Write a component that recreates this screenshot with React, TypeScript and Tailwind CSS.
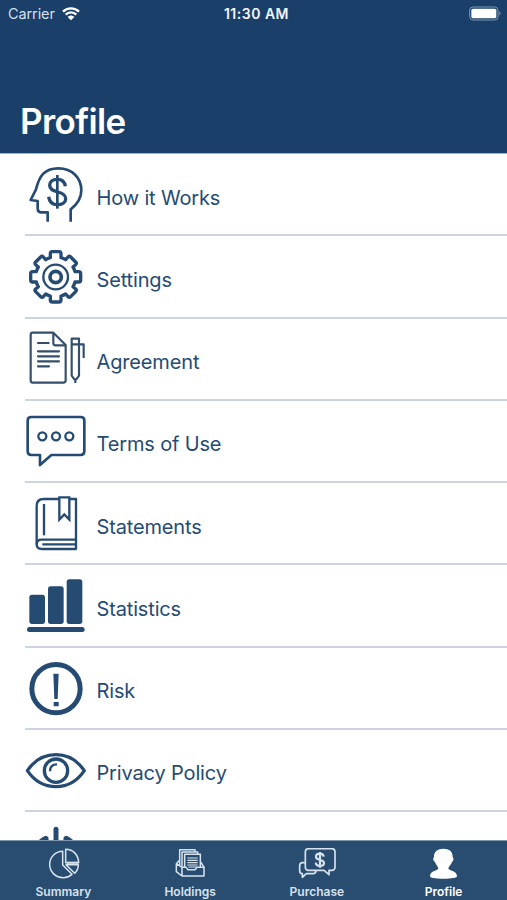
import React from 'react';

type IconProps = { children: React.ReactNode };

const RowIcon: React.FC<IconProps> = ({ children }) => (
  <svg
    className="w-16 h-15 shrink-0"
    viewBox="30 30 192 180"
    fill="none"
    stroke="currentColor"
    strokeWidth="8"
    strokeLinejoin="round"
  >
    {children}
  </svg>
);

const HowItWorksIcon = () => (
  <RowIcon>
    <path d="M98 200V172H77Q68 172 68 160V138L47 135L63 103C73 64 87 40 130 40C172 40 199 69 199 106C199 132 187 148 167 163V200" />
    <path d="M127 60V161" />
    <path d="M151 94C149 79 140 73 127 73C112 73 104 81 104 91C104 103 113 107 128 111C145 115 152 120 152 132C152 142 142 149 127 149C112 149 103 140 101 125" strokeWidth="10" />
  </RowIcon>
);

const SettingsIcon = () => (
  <RowIcon>
    <path strokeWidth="10" d="M106 62V50Q106 44 112 44H132Q138 44 138 50V62Q146 64 152 68L159 60Q163 56 167 60L182 75Q186 79 182 83L174 90Q178 96 180 104H191Q197 104 197 110V129Q197 135 191 135H180Q178 143 174 149L182 156Q186 160 182 164L167 179Q163 183 159 179L152 171Q146 175 138 177V189Q138 195 132 195H112Q106 195 106 189V177Q98 175 92 171L85 179Q81 183 77 179L62 164Q58 160 62 156L70 149Q66 143 64 135H53Q47 135 47 129V110Q47 104 53 104H64Q66 96 70 90L62 83Q58 79 62 75L77 60Q81 56 85 60L92 68Q98 64 106 62Z" />
    <circle cx="122" cy="120" r="37" strokeWidth="7" />
    <circle cx="122" cy="120" r="17" strokeWidth="11" />
  </RowIcon>
);

const AgreementIcon = () => (
  <RowIcon>
    <g strokeWidth="6.5" stroke="#334f6b">
      <path d="M53 41H115L152 78V184Q152 191 145 191H53Q47 191 47 184V48Q47 41 53 41Z" />
      <path d="M115 42V72Q115 79 122 79H151" />
      <path d="M69 72H101M69 97H132M69 112H132M69 127H132M69 142H102" strokeLinecap="round" />
      <path d="M170 59H192V170L184 181H178L170 170ZM170 76H206V117M181 181V192" />
    </g>
  </RowIcon>
);

const TermsIcon = () => (
  <RowIcon>
    <path d="M49 48H197Q208 48 208 59V151Q208 162 197 162H109L75 192V162H49Q38 162 38 151V59Q38 48 49 48Z" />
    <circle cx="82" cy="106" r="12" strokeWidth="7" />
    <circle cx="123" cy="106" r="12" strokeWidth="7" />
    <circle cx="163" cy="106" r="12" strokeWidth="7" />
  </RowIcon>
);

const StatementsIcon = () => (
  <RowIcon>
    <g strokeWidth="7">
      <path d="M132 45H86Q65 45 65 65V181Q65 195 80 195H183V45H164" />
      <path d="M65 181Q65 167 80 167H183M183 181H82" />
      <path d="M87 60V154" />
      <path d="M133 40H163V107L148 91L133 107Z" strokeLinejoin="miter" />
    </g>
  </RowIcon>
);

const StatisticsIcon = () => (
  <RowIcon>
    <g fill="currentColor" stroke="none">
      <rect x="43" y="86" width="47" height="88" rx="8" />
      <rect x="99" y="61" width="47" height="113" rx="8" />
      <rect x="155" y="40" width="47" height="134" rx="8" />
      <rect x="36" y="183" width="173" height="15" rx="7.5" />
    </g>
  </RowIcon>
);

const RiskIcon = () => (
  <RowIcon>
    <circle cx="123" cy="122" r="72.5" strokeWidth="15" />
    <path d="M115 77H131L128 153H118ZM116 162H131V175H116Z" fill="currentColor" stroke="none" />
  </RowIcon>
);

const PrivacyIcon = () => (
  <RowIcon>
    <path d="M37 122C58 91 88 74 123 74C158 74 187 91 208 122C187 153 158 170 123 170C88 170 58 153 37 122Z" strokeWidth="9.5" />
    <circle cx="123" cy="122" r="35" strokeWidth="10" />
    <path d="M105 124C105 111 113 103 126 103" strokeWidth="7" />
  </RowIcon>
);

const LogoutIcon = () => (
  <RowIcon>
    <path d="M123 49V120" strokeWidth="15" strokeLinecap="round" />
    <path d="M92 77A65 65 0 1 0 154 77" strokeWidth="17" strokeLinecap="round" />
  </RowIcon>
);

const rows = [
  { label: 'How it Works', Icon: HowItWorksIcon },
  { label: 'Settings', Icon: SettingsIcon },
  { label: 'Agreement', Icon: AgreementIcon },
  { label: 'Terms of Use', Icon: TermsIcon },
  { label: 'Statements', Icon: StatementsIcon },
  { label: 'Statistics', Icon: StatisticsIcon },
  { label: 'Risk', Icon: RiskIcon },
  { label: 'Privacy Policy', Icon: PrivacyIcon },
  { label: '', Icon: LogoutIcon },
];

const TabIcon: React.FC<IconProps & { viewBox: string }> = ({ children, viewBox }) => (
  <svg
    className="w-10 h-8"
    viewBox={viewBox}
    fill="none"
    stroke="currentColor"
    strokeWidth="4.5"
    strokeLinejoin="round"
  >
    {children}
  </svg>
);

const SummaryIcon = () => (
  <TabIcon viewBox="-3 1 120 96">
    <path d="M56 11C32 12 17 30 17 50C17 73 35 90 58 90C68 90 77 86 84 80L56 52Z" />
    <path d="M65 5V45H104C103 22 88 5 65 5Z" />
    <path d="M66 51H103C103 61 99 70 92 77Z" />
    <path d="M67 44H103M68 48H103" opacity=".7" />
  </TabIcon>
);

const HoldingsIcon = () => (
  <TabIcon viewBox="0 2 120 96">
    <path d="M19 49L36 60H48L54 67H75L81 60H102V86H36L19 73ZM36 60V86" />
    <path d="M19 49L29 38M102 60L93 45M29 54V7H75V13M36 58V14H83V21M44 60V21H91V60" />
    <path d="M52 32H83M52 39H83M52 46H83M52 53H83M55 59H80" strokeWidth="3.5" />
  </TabIcon>
);

const PurchaseIcon = () => (
  <TabIcon viewBox="-7 2 120 96">
    <path d="M28 4H97Q107 4 107 14V59Q107 69 97 69H89V82L74 69H28Q18 69 18 59V14Q18 4 28 4Z" strokeWidth="5" />
    <path d="M17 46H10Q1 46 1 55V70Q1 79 9 79V90L21 79H42Q49 79 50 70" strokeWidth="5" />
    <path d="M73 28C72 21 67 19 62 19C55 19 50 22 50 28C50 35 56 36 62 37C69 39 74 41 74 47C74 53 69 56 62 56C54 56 50 53 49 46M62 14V61" strokeWidth="6.5" />
  </TabIcon>
);

const ProfileIcon = () => (
  <TabIcon viewBox="3 2 120 96">
    <path
      d="M61 4C78 4 90 12 89 30C93 33 92 41 87 44C84 53 77 57 76 63C77 71 101 70 102 86C102 92 87 94 61 94C35 94 21 92 21 86C22 70 45 71 46 63C45 57 39 53 36 44C30 41 29 33 33 30C32 12 45 4 61 4Z"
      fill="currentColor"
      stroke="none"
    />
  </TabIcon>
);

const tabs = [
  { label: 'Summary', Icon: SummaryIcon, active: false },
  { label: 'Holdings', Icon: HoldingsIcon, active: false },
  { label: 'Purchase', Icon: PurchaseIcon, active: false },
  { label: 'Profile', Icon: ProfileIcon, active: true },
];

const StatusBar = () => (
  <div className="grid grid-cols-3 items-center h-7 pl-2 pr-1.5 text-sm">
    <div className="flex items-center gap-[7px] text-[#d5dfeb]">
      <span className="text-[14.5px] tracking-[-0.1px]">Carrier</span>
      <svg className="w-[18px] h-[14px] text-white" viewBox="0 0 54 42" fill="none" stroke="currentColor" strokeWidth="7">
        <path d="M3 14C16 1 38 1 51 14M11 23C20 14 34 14 43 23" />
        <path d="M17 30C23 24 31 24 37 30L27 40Z" fill="currentColor" stroke="none" />
      </svg>
    </div>
    <span className="text-center font-semibold text-[#f2f6fa] tracking-[0.5px] pl-1">11:30 AM</span>
    <svg className="w-8 h-[15px] -mt-px justify-self-end" viewBox="0 0 96 45">
      <rect x="2" y="3" width="85" height="39" rx="10" fill="none" stroke="#8098b3" strokeWidth="3" />
      <rect x="7" y="8" width="75" height="29" rx="5" fill="#fff" />
      <path d="M91 16Q98 22 91 29Z" fill="#8098b3" />
    </svg>
  </div>
);

export default function App() {
  return (
    <div className="flex flex-col w-full h-[900px] overflow-hidden bg-white font-['Inter',sans-serif]">
      <header className="flex flex-col justify-between h-[154px] shrink-0 bg-[#1a3f69] border-b border-[#9fb3cc]">
        <StatusBar />
        <h1 className="px-5 pb-3 text-[35px] leading-10 font-semibold tracking-[-0.6px] text-white">Profile</h1>
      </header>

      <main className="flex-1 min-h-0 overflow-hidden">
        {rows.map(({ label, Icon }, i) => (
          <div key={i} className="h-[82.25px] pl-[25px] text-[#254b73]">
            <div className="flex items-center gap-[7.5px] h-full pt-px border-b-2 border-[#cdd4e0]">
              <Icon />
              <span className="pt-1.5 text-[20px] leading-6 tracking-[-0.15px]">{label}</span>
            </div>
          </div>
        ))}
      </main>

      <nav className="grid grid-cols-4 h-15 shrink-0 bg-[#294d71] border-t border-[#7f96ae]">
        {tabs.map(({ label, Icon, active }) => (
          <div key={label} className={`flex flex-col items-center pt-[7px] ${active ? 'text-white' : 'text-[#d7e3ef]'}`}>
            <Icon />
            <span className="mt-1 text-[12px] leading-4 font-semibold">{label}</span>
          </div>
        ))}
      </nav>
    </div>
  );
}
